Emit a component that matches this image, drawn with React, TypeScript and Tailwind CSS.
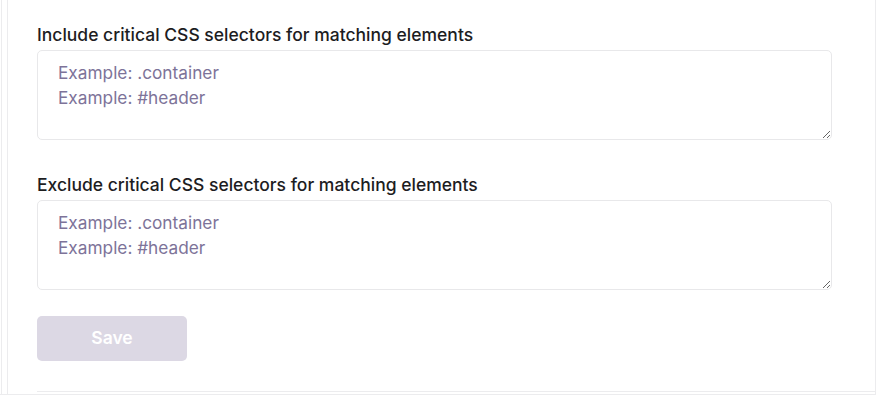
import React from 'react'

function SelectorField({ label }: { label: string }) {
    return (
        <div className="flex flex-col">
            <label className="text-[17.5px] leading-[24px] font-medium text-[#1d1d1f] mb-[3px]">{label}</label>
            <textarea
                rows={3}
                placeholder={"Example: .container\nExample: #header"}
                className="w-[795px] h-[90px] rounded-[5px] border border-[#e8e8ea] bg-white px-[20px] py-[9px] text-[17.25px] leading-[25px] text-[#1d1d1f] placeholder:text-[#7d7399] outline-none"
            />
        </div>
    )
}

export default function App() {
    return (
        <div
            className="w-[876px] h-[395px] bg-white overflow-hidden flex border-b border-[#ececee]"
            style={{ fontFamily: 'Inter, "Noto Sans", sans-serif' }}
        >
            <div className="w-[7px] shrink-0 border-l border-r border-[#ececee] ml-px" />
            <div className="flex-1 flex flex-col border-r border-[#ececee]">
                <div className="pl-[29px] pt-[23px] flex flex-col gap-[33px]">
                    <SelectorField label="Include critical CSS selectors for matching elements" />
                    <SelectorField label="Exclude critical CSS selectors for matching elements" />
                </div>
                <div className="pl-[29px] pt-[26px]">
                    <button
                        disabled
                        className="w-[150px] h-[45px] rounded-[5px] bg-[#dcd8e4] text-white text-[17.5px] font-semibold"
                    >
                        Save
                    </button>
                </div>
                <div className="ml-[29px] mt-auto mb-[2px] border-t border-[#ececee]" />
            </div>
        </div>
    )
}
